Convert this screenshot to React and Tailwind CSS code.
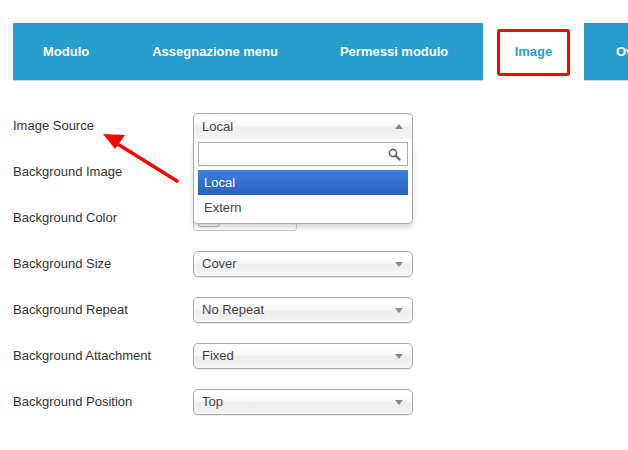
const selectBg = 'bg-[linear-gradient(#ffffff_20%,#f6f6f6_50%,#eeeeee_52%,#f4f4f4_100%)]'

function Caret({ up = false }) {
  return (
    <svg width="8" height="5" viewBox="0 0 8 5" className="ml-auto shrink-0">
      <path d={up ? 'M0 5 L4 0 L8 5 Z' : 'M0 0 L8 0 L4 5 Z'} fill="#888" />
    </svg>
  )
}

function FakeSelect({ value }) {
  return (
    <div className={`flex h-[26px] w-[220px] items-center rounded-[5px] border border-[#aaa] ${selectBg} pl-[8px] pr-[9px] text-[13px] text-[#444] shadow-[0_0_3px_#fff_inset,0_1px_1px_rgba(0,0,0,0.1)]`}>
      <span>{value}</span>
      <Caret />
    </div>
  )
}

function OpenSelect() {
  return (
    <div className="relative w-[220px]">
      <div className={`flex h-[26px] items-center rounded-t-[5px] border border-[#aaa] border-b-0 ${selectBg} pl-[8px] pr-[9px] text-[13px] text-[#444]`}>
        <span>Local</span>
        <Caret up />
      </div>
      <div className="absolute left-0 top-[26px] z-10 w-[220px] rounded-b-[5px] border border-t-0 border-[#aaa] bg-white px-[4px] pb-[3px] pt-[3px] shadow-[0_4px_5px_rgba(0,0,0,0.15)]">
        <div className="flex h-[24px] items-center border border-[#aaa] bg-white pr-[6px]">
          <svg width="13" height="13" viewBox="0 0 13 13" className="ml-auto">
            <circle cx="5" cy="5" r="3.6" fill="none" stroke="#666" strokeWidth="1.6" />
            <path d="M7.6 7.6 L11.5 11.5" stroke="#666" strokeWidth="2.2" strokeLinecap="round" />
          </svg>
        </div>
        <div className="mt-[4px] flex h-[25px] items-center bg-[linear-gradient(#3c7fdf,#2a62bc)] px-[6px] text-[13px] text-white">
          Local
        </div>
        <div className="flex h-[25px] items-center px-[6px] text-[13px] text-[#444]">Extern</div>
      </div>
    </div>
  )
}

function ColorField() {
  return (
    <div className="flex h-[26px] w-[104px] items-center rounded-[3px] border border-[#ccc] bg-white pl-[4px]">
      <div className="h-[18px] w-[22px] rounded-[3px] border border-[#bbb] bg-white" />
    </div>
  )
}

export default function App() {
  const rows = [
    ['Image Source', <OpenSelect key="s" />],
    ['Background Image', null],
    ['Background Color', <ColorField key="c" />],
    ['Background Size', <FakeSelect key="z" value="Cover" />],
    ['Background Repeat', <FakeSelect key="r" value="No Repeat" />],
    ['Background Attachment', <FakeSelect key="a" value="Fixed" />],
    ['Background Position', <FakeSelect key="p" value="Top" />],
  ]

  return (
    <div className="relative h-[450px] w-[628px] overflow-hidden bg-white font-['Liberation_Sans',Arial,sans-serif]">
      <div className="flex items-center whitespace-nowrap pl-[13px] pt-[23px]">
        <div className="flex h-[58px] w-[470px] shrink-0 items-center border-b border-[#d4d4d4] bg-[#289dcc] text-[13px] font-bold text-white">
          <span className="px-[30px]">Modulo</span>
          <span className="pl-[33px] pr-[31px]">Assegnazione menu</span>
          <span className="px-[31px]">Permessi modulo</span>
        </div>
        <div className="ml-[14px] flex h-[47px] w-[73px] shrink-0 items-center justify-center rounded-[3px] border-[3px] border-[#ff0000] bg-white text-[13px] font-bold text-[#2a9fd0]">
          Image
        </div>
        <div className="ml-[14px] flex h-[58px] w-[80px] shrink-0 items-center border-b border-[#d4d4d4] bg-[#289dcc] pl-[32px] text-[13px] font-bold text-white">
          Ov
        </div>
      </div>

      <div className="pt-[22px]">
        {rows.map(([label, control]) => (
          <div key={label} className="flex h-[46px] items-center">
            <div className="w-[193px] shrink-0 pl-[13px] text-[13px] text-[#333]">{label}</div>
            {control}
          </div>
        ))}
      </div>

      <svg className="absolute left-0 top-0" width="628" height="450" viewBox="0 0 628 450">
        <path d="M177 181 L116 143" stroke="#ff0000" strokeWidth="3.5" strokeLinecap="round" />
        <path d="M103 134 L125 135 L115 149 Z" fill="#ff0000" />
      </svg>
    </div>
  )
}
